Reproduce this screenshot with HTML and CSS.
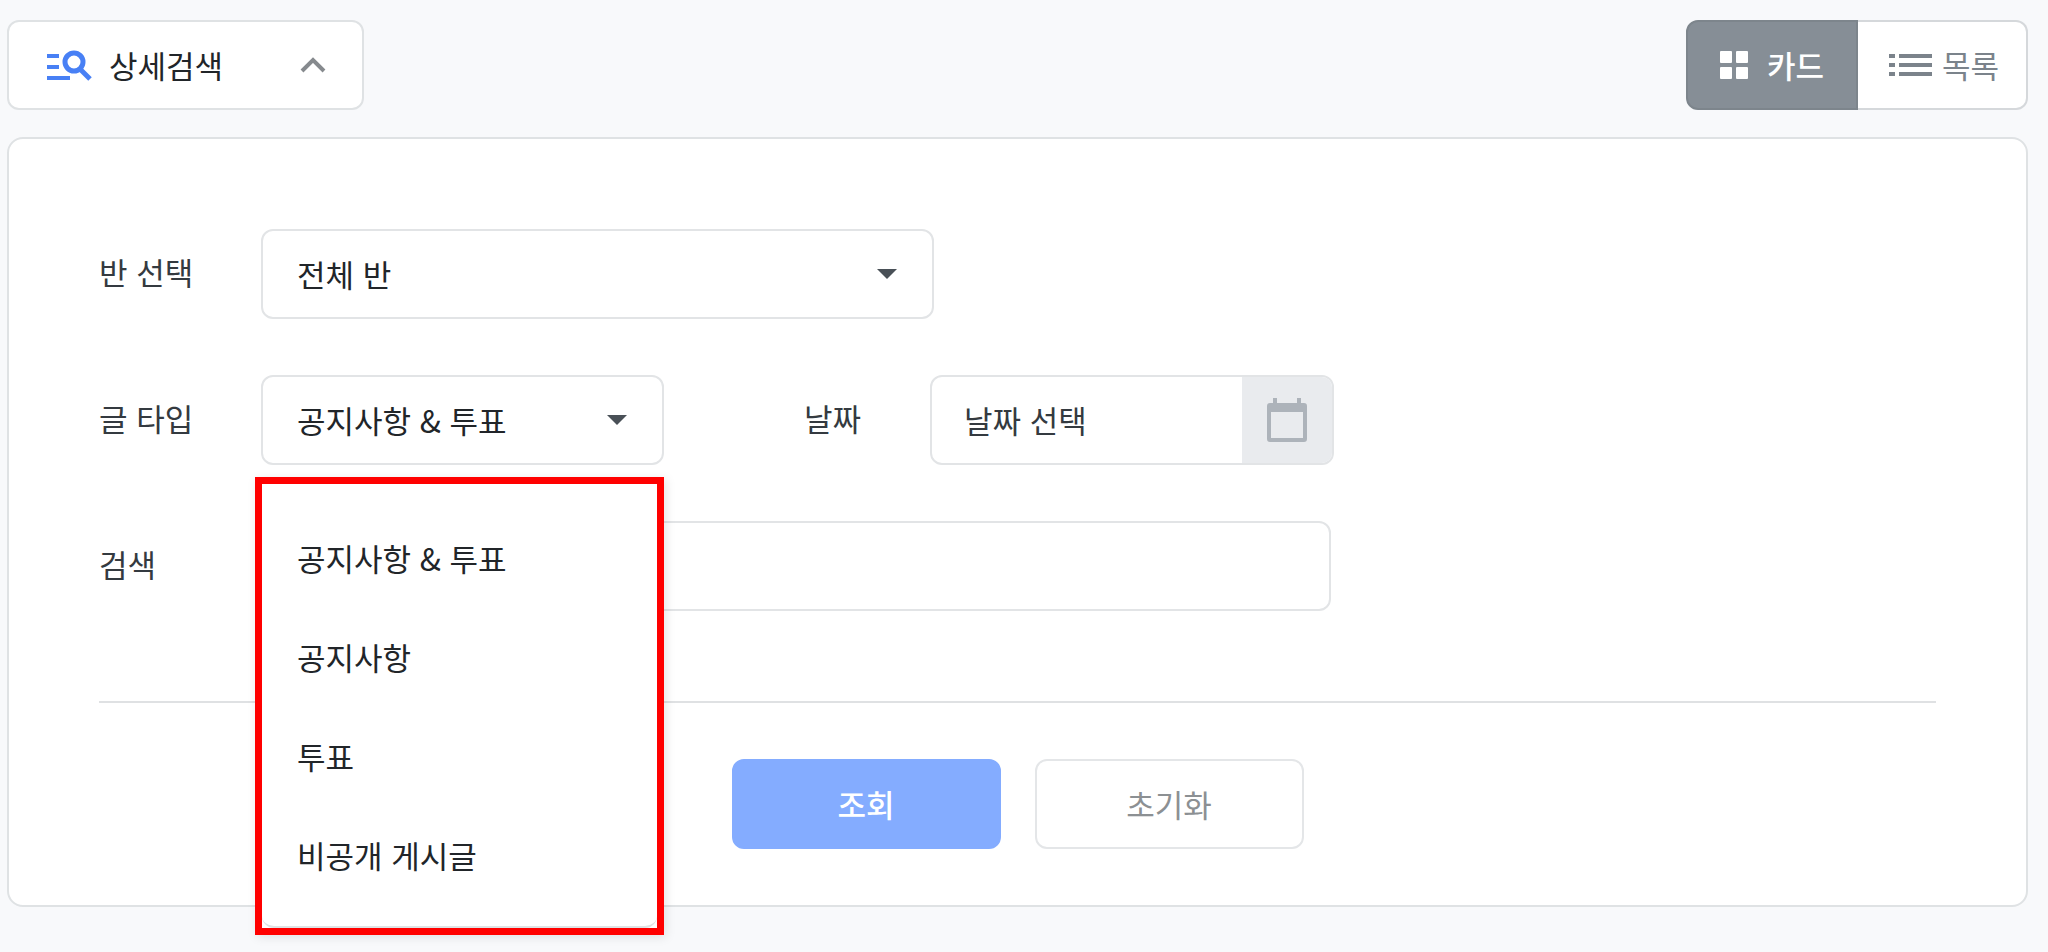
FILE: index.html
```html
<!DOCTYPE html>
<html lang="ko">
<head>
  <meta charset="UTF-8">
  <meta name="viewport" content="width=device-width, initial-scale=1">
  <title>상세검색</title>
  <link rel="stylesheet" href="styles.css">
</head>
<body>
  <div class="toolbar">
    <button type="button" class="detail-toggle" aria-expanded="true" aria-controls="search-panel">
      <svg class="icon-search" viewBox="0 0 46 34" fill="none" stroke="#4880f5" stroke-width="4" aria-hidden="true">
        <path d="M0 8h12M0 19h12M0 30h23"/>
        <circle cx="27" cy="14" r="9" stroke-width="5"/>
        <path d="M33 21l10 10" stroke-width="5"/>
      </svg>
      <span>상세검색</span>
      <svg class="icon-chevron" viewBox="0 0 26 16" fill="none" stroke="#868a8e" stroke-width="4" aria-hidden="true">
        <path d="M2 14L13 3l11 11"/>
      </svg>
    </button>

    <div class="view-switch">
      <button type="button" class="view-btn active" aria-pressed="true">
        <svg class="icon-grid" viewBox="0 0 28 28" fill="#fff" aria-hidden="true">
          <rect width="12" height="12" rx="1"/>
          <rect x="16" width="12" height="12" rx="1"/>
          <rect y="16" width="12" height="12" rx="1"/>
          <rect x="16" y="16" width="12" height="12" rx="1"/>
        </svg>
        <span>카드</span>
      </button>
      <button type="button" class="view-btn view-list" aria-pressed="false">
        <svg class="icon-list" viewBox="0 0 43 24" fill="#7b838b" aria-hidden="true">
          <path d="M0 1h6v4H0zM10 1h33v4H10zM0 10h6v4H0zM10 10h33v4H10zM0 19h6v4H0zM10 19h33v4H10z"/>
        </svg>
        <span>목록</span>
      </button>
    </div>
  </div>

  <form class="panel" id="search-panel">
    <div class="form-row">
      <label class="form-label" for="class-select">반 선택</label>
      <div class="select-box select-wide">
        <select class="control" id="class-select">
          <option>전체 반</option>
        </select>
        <svg class="caret" viewBox="0 0 20 10" aria-hidden="true"><path d="M0 0h20L10 10z"/></svg>
      </div>
    </div>

    <div class="form-row">
      <label class="form-label" for="type-select">글 타입</label>
      <div class="select-box">
        <select class="control" id="type-select">
          <option>공지사항 &amp; 투표</option>
          <option>공지사항</option>
          <option>투표</option>
          <option>비공개 게시글</option>
        </select>
        <svg class="caret" viewBox="0 0 20 10" aria-hidden="true"><path d="M0 0h20L10 10z"/></svg>
        <div class="type-menu">
          <ul class="menu-list" role="listbox" aria-label="글 타입">
            <li role="option" aria-selected="true">공지사항 &amp; 투표</li>
            <li role="option" aria-selected="false">공지사항</li>
            <li role="option" aria-selected="false">투표</li>
            <li role="option" aria-selected="false">비공개 게시글</li>
          </ul>
        </div>
      </div>

      <label class="form-label date-label" for="date">날짜</label>
      <div class="date-box">
        <input class="date-input" id="date" type="text" placeholder="날짜 선택">
        <button type="button" class="date-btn" aria-label="날짜 선택">
          <svg class="icon-calendar" viewBox="0 0 40 44" aria-hidden="true">
            <path d="M3 5h34a3 3 0 0 1 3 3v33a3 3 0 0 1-3 3H3a3 3 0 0 1-3-3V8a3 3 0 0 1 3-3zM4 14v26h32V14z" fill="#adb3ba" fill-rule="evenodd"/>
            <path d="M6 0h4v6H6zM30 0h4v6h-4z" fill="#adb3ba"/>
          </svg>
        </button>
      </div>
    </div>

    <div class="form-row">
      <label class="form-label" for="keyword">검색</label>
      <input class="control keyword" id="keyword" type="text">
    </div>

    <div class="actions">
      <button type="submit" class="btn btn-primary">조회</button>
      <button type="reset" class="btn">초기화</button>
    </div>
  </form>
</body>
</html>
```

FILE: styles.css
```css
* {
    box-sizing: border-box;
}

body {
    margin: 0;
    padding: 20px 20px 44px 7px;
    background-color: #f8f9fb;
    color: #212529;
    font-family: 'Noto Sans CJK KR', sans-serif;
    font-size: 31px;
    line-height: 40px;
}

button, input, select {
    font: inherit;
    color: inherit;
}

button {
    cursor: pointer;
}

svg {
    display: block;
    flex-shrink: 0;
}

.toolbar {
    display: flex;
    justify-content: space-between;
    margin-bottom: 27px;
}

.detail-toggle {
    display: flex;
    align-items: center;
    width: 357px;
    height: 90px;
    padding: 0 36px 0 38px;
    background-color: #fff;
    border: 2px solid #dfe2e4;
    border-radius: 12px;
}

.icon-search {
    width: 46px;
    height: 34px;
    margin-right: 16px;
}

.icon-chevron {
    width: 26px;
    height: 16px;
    margin-left: auto;
}

.view-switch {
    display: flex;
}

.view-btn {
    display: flex;
    align-items: center;
    justify-content: center;
    gap: 19px;
    width: 172px;
    height: 90px;
    padding: 0;
    background-color: #fff;
    border: 2px solid #d5d8db;
    border-left: 0;
    border-radius: 0 12px 12px 0;
    color: #7b838b;
}

.view-btn.active {
    background-color: #868e96;
    border: 2px solid #7d858c;
    border-radius: 12px 0 0 12px;
    color: #fff;
    font-weight: 500;
}

.view-list {
    gap: 10px;
    width: 170px;
    padding-left: 4px;
}

.icon-grid {
    width: 28px;
    height: 28px;
}

.icon-list {
    width: 43px;
    height: 24px;
}

.panel {
    padding: 90px;
    padding-bottom: 56px;
    background-color: #fff;
    border: 2px solid #dfe2e4;
    border-radius: 16px;
}

.form-row {
    display: flex;
    align-items: center;
    margin-bottom: 56px;
}

.form-label {
    flex-shrink: 0;
    width: 162px;
    padding-bottom: 4px;
    color: #343a40;
}

.date-label {
    width: 126px;
    margin-left: 140px;
}

.select-box {
    position: relative;
    flex: 0 1 403px;
}

.select-wide {
    flex-basis: 673px;
}

.control {
    display: block;
    width: 100%;
    height: 90px;
    padding: 0 34px;
    background-color: #fff;
    border: 2px solid #e2e4e6;
    border-radius: 12px;
    appearance: none;
}

.keyword {
    flex: 0 1 1070px;
}

.caret {
    position: absolute;
    top: 40px;
    right: 37px;
    width: 20px;
    height: 10px;
    fill: #495057;
    pointer-events: none;
}

.type-menu {
    position: absolute;
    top: calc(100% + 12px);
    left: -6px;
    right: 0;
    z-index: 10;
    background-color: #fff;
    border: 7px solid #f00;
    box-shadow: 2px 2px 10px rgba(0, 0, 0, 0.1);
}

.menu-list {
    margin: 0;
    padding: 24px 0 22px;
    border-bottom: 2px solid #dfe2e4;
    border-radius: 12px;
    list-style: none;
}

.menu-list li {
    height: 99px;
    padding: 0 35px;
    line-height: 99px;
}

.date-box {
    display: flex;
    flex: 0 1 404px;
    min-width: 0;
    height: 90px;
    overflow: hidden;
    background-color: #fff;
    border: 2px solid #e2e4e6;
    border-radius: 12px;
}

.date-input {
    flex: 1;
    min-width: 0;
    padding: 0 32px;
    border: 0;
    background: none;
}

.date-input::placeholder {
    color: #343a40;
    opacity: 1;
}

.date-btn {
    display: flex;
    align-items: center;
    justify-content: center;
    width: 90px;
    padding: 0;
    background-color: #e9ebee;
    border: 0;
}

.icon-calendar {
    width: 40px;
    height: 44px;
}

.actions {
    display: flex;
    justify-content: center;
    gap: 34px;
    margin-top: 90px;
    padding-top: 56px;
    border-top: 2px solid #dfe1e3;
}

.btn {
    width: 269px;
    height: 90px;
    background-color: #fff;
    border: 2px solid #e4e6e8;
    border-radius: 12px;
    color: #8c9093;
}

.btn-primary {
    background-color: #84acff;
    border-color: #84acff;
    color: #fff;
    font-weight: 500;
}
```
